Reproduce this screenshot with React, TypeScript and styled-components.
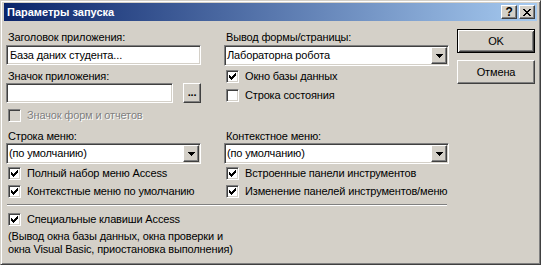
import React from "react";
import styled, { createGlobalStyle, css } from "styled-components";

const GlobalStyle = createGlobalStyle`
  html, body {
    margin: 0;
    padding: 0;
    background: #d4d0c8;
  }
  body {
    font-family: "Liberation Sans", Arial, sans-serif;
    font-size: 11px;
    letter-spacing: -0.15px;
    color: #000;
  }
`;

// classic 3d borders
const sunken = css`
  border-style: solid;
  border-width: 1px;
  border-color: #808080 #ffffff #ffffff #808080;
  box-shadow: inset 1px 1px 0 #404040, inset -1px -1px 0 #d4d0c8;
`;

const raised = css`
  border-style: solid;
  border-width: 1px;
  border-color: #ffffff #404040 #404040 #ffffff;
  box-shadow: inset -1px -1px 0 #808080, inset 1px 1px 0 #d4d0c8;
`;

const CheckMark = () => (
  <svg width="7" height="7" viewBox="0 0 7 7" shapeRendering="crispEdges">
    <path
      fill="#000"
      d="M6 0h1v1h-1z M5 1h2v1h-2z M0 2h1v1h-1z M4 2h3v1h-3z M0 3h2v1h-2z M3 3h3v1h-3z M0 4h5v1h-5z M1 5h3v1h-3z M2 6h1v1h-1z"
    />
  </svg>
);

const DownArrow = () => (
  <svg width="7" height="4" viewBox="0 0 7 4" shapeRendering="crispEdges">
    <path fill="#000" d="M0 0h7v1h-7z M1 1h5v1h-5z M2 2h3v1h-3z M3 3h1v1h-1z" />
  </svg>
);

const CloseGlyph = () => (
  <svg width="8" height="7" viewBox="0 0 8 7" shapeRendering="crispEdges">
    <path
      fill="#000"
      d="M0 0h2v1h-2z M6 0h2v1h-2z M1 1h2v1h-2z M5 1h2v1h-2z M2 2h4v1h-4z M3 3h2v1h-2z M2 4h4v1h-4z M1 5h2v1h-2z M5 5h2v1h-2z M0 6h2v1h-2z M6 6h2v1h-2z"
    />
  </svg>
);

type CheckProps = {
  label: string;
  checked?: boolean;
  disabled?: boolean;
  $top?: number;
};

const Check = ({ label, checked, disabled, $top }: CheckProps) => (
  <CheckRow $top={$top}>
    <CheckBoxFrame $disabled={disabled}>{checked && <CheckMark />}</CheckBoxFrame>
    <CheckLabel $disabled={disabled}>{label}</CheckLabel>
  </CheckRow>
);

const Combo = ({ value }: { value: string }) => (
  <ComboFrame>
    <ComboText>{value}</ComboText>
    <DropButton>
      <DownArrow />
    </DropButton>
  </ComboFrame>
);

const App = () => {
  return (
    <>
      <GlobalStyle />
      <Window>
        <TitleBar>
          <Title>Параметры запуска</Title>
          <CaptionButtons>
            <CaptionButton>?</CaptionButton>
            <CaptionButton>
              <CloseGlyph />
            </CaptionButton>
          </CaptionButtons>
        </TitleBar>
        <Body>
          <Main>
            <Grid>
              <Column>
                <Label>Заголовок приложения:</Label>
                <TextField $top={1}>База даних студента...</TextField>
                <Label $top={5}>Значок приложения:</Label>
                <FieldRow>
                  <TextField $width={167} />
                  <BrowseButton>...</BrowseButton>
                </FieldRow>
                <Check label="Значок форм и отчетов" disabled $top={6} />
              </Column>
              <Column>
                <Label>Вывод формы/страницы:</Label>
                <ComboSlot $top={1}>
                  <Combo value="Лабораторна робота" />
                </ComboSlot>
                <Check label="Окно базы данных" checked $top={4} />
                <Check label="Строка состояния" $top={6} />
              </Column>
            </Grid>
            <Grid $top={8}>
              <Column>
                <Label>Строка меню:</Label>
                <Combo value="(по умолчанию)" />
                <Check label="Полный набор меню Access" checked $top={3} />
                <Check label="Контекстные меню по умолчанию" checked $top={5} />
              </Column>
              <Column>
                <Label>Контекстное меню:</Label>
                <Combo value="(по умолчанию)" />
                <Check label="Встроенные панели инструментов" checked $top={3} />
                <Check label="Изменение панелей инструментов/меню" checked $top={5} />
              </Column>
            </Grid>
            <Separator />
            <Check label="Специальные клавиши Access" checked $top={7} />
            <Note>
              (Вывод окна базы данных, окна проверки и
              <br />
              окна Visual Basic, приостановка выполнения)
            </Note>
          </Main>
          <Buttons>
            <PushButton $default>OK</PushButton>
            <PushButton>Отмена</PushButton>
          </Buttons>
        </Body>
      </Window>
    </>
  );
};

export default App;

// component 생성
const Window = styled.div`
  width: 541px;
  height: 265px;
  box-sizing: border-box;
  padding: 2px;
  background: #d4d0c8;
  border-style: solid;
  border-width: 1px;
  border-color: #d4d0c8 #404040 #404040 #d4d0c8;
  box-shadow: inset 1px 1px 0 #ffffff, inset -1px -1px 0 #808080;
  display: flex;
  flex-direction: column;
`;

const TitleBar = styled.div`
  height: 18px;
  margin: 0 1px;
  display: flex;
  align-items: center;
  justify-content: space-between;
  background: linear-gradient(to right, #0a246a, #a6caf0);
`;

const Title = styled.div`
  padding-left: 3px;
  color: #fff;
  font-weight: bold;
  font-size: 11px;
  letter-spacing: 0;
  line-height: 13px;
`;

const CaptionButtons = styled.div`
  display: flex;
  gap: 2px;
  margin-right: 2px;
`;

const CaptionButton = styled.div`
  ${raised};
  box-sizing: border-box;
  width: 16px;
  height: 14px;
  background: #d4d0c8;
  display: flex;
  align-items: center;
  justify-content: center;
  font-weight: bold;
  font-size: 12px;
  line-height: 11px;
`;

const Body = styled.div`
  flex: 1;
  display: flex;
  padding: 0 0 0 3px;
`;

const Main = styled.div`
  width: 443px;
  padding-top: 10px;
`;

const Grid = styled.div<{ $top?: number }>`
  display: grid;
  grid-template-columns: 195px 225px;
  column-gap: 23px;
  margin-top: ${(props) => props.$top ?? 0}px;
`;

const Column = styled.div`
  display: flex;
  flex-direction: column;
  align-items: flex-start;
`;

const Label = styled.div<{ $top?: number }>`
  height: 13px;
  line-height: 13px;
  padding-left: 2px;
  margin-top: ${(props) => props.$top ?? 0}px;
  white-space: nowrap;
`;

const TextField = styled.div<{ $top?: number; $width?: number }>`
  ${sunken};
  box-sizing: border-box;
  width: ${(props) => props.$width ?? 195}px;
  height: 20px;
  margin-top: ${(props) => props.$top ?? 0}px;
  padding: 0 3px;
  background: #fff;
  line-height: 18px;
  white-space: nowrap;
`;

const FieldRow = styled.div`
  display: flex;
  gap: 10px;
  width: 100%;
`;

const BrowseButton = styled.div`
  ${raised};
  box-sizing: border-box;
  width: 18px;
  height: 20px;
  display: flex;
  align-items: center;
  justify-content: center;
  font-weight: bold;
  font-size: 11px;
  line-height: 10px;
  padding-bottom: 3px;
`;

const ComboSlot = styled.div<{ $top?: number }>`
  width: 100%;
  margin-top: ${(props) => props.$top ?? 0}px;
`;

const ComboFrame = styled.div`
  ${sunken};
  box-sizing: border-box;
  width: 100%;
  height: 21px;
  padding: 1px;
  display: flex;
  align-items: stretch;
  background: #fff;
`;

const ComboText = styled.div`
  flex: 1;
  padding-left: 1px;
  line-height: 17px;
  white-space: nowrap;
`;

const DropButton = styled.div`
  ${raised};
  box-sizing: border-box;
  width: 16px;
  background: #d4d0c8;
  display: flex;
  align-items: center;
  justify-content: center;
`;

const CheckRow = styled.div<{ $top?: number }>`
  display: flex;
  align-items: center;
  height: 13px;
  margin-top: ${(props) => props.$top ?? 0}px;
  padding-left: 2px;
`;

const CheckBoxFrame = styled.div<{ $disabled?: boolean }>`
  ${sunken};
  box-sizing: border-box;
  width: 13px;
  height: 13px;
  flex: none;
  display: flex;
  align-items: center;
  justify-content: center;
  background: ${(props) => (props.$disabled ? "#d4d0c8" : "#fff")};
`;

const CheckLabel = styled.span<{ $disabled?: boolean }>`
  margin-left: 6px;
  line-height: 13px;
  white-space: nowrap;
  color: ${(props) => (props.$disabled ? "#808080" : "#000")};
  text-shadow: ${(props) => (props.$disabled ? "1px 1px 0 #fff" : "none")};
`;

const Separator = styled.div`
  height: 0;
  margin: 6px 2px 0 1px;
  border-top: 1px solid #808080;
  border-bottom: 1px solid #fff;
`;

const Note = styled.div`
  margin-top: 4px;
  padding-left: 2px;
  line-height: 13px;
  white-space: nowrap;
`;

const Buttons = styled.div`
  display: flex;
  flex-direction: column;
  gap: 7px;
  margin: 8px 0 0 8px;
`;

const PushButton = styled.div<{ $default?: boolean }>`
  box-sizing: border-box;
  width: 78px;
  height: 24px;
  display: flex;
  align-items: center;
  justify-content: center;
  background: #d4d0c8;
  border: 1px solid #000;
  box-shadow: ${(props) =>
    props.$default
      ? "inset 1px 1px 0 #fff, inset -1px -1px 0 #404040, inset 2px 2px 0 #d4d0c8, inset -2px -2px 0 #808080"
      : "none"};
  ${(props) =>
    !props.$default &&
    css`
      border-color: #ffffff #404040 #404040 #ffffff;
      box-shadow: inset -1px -1px 0 #808080, inset 1px 1px 0 #d4d0c8;
    `}
`;
